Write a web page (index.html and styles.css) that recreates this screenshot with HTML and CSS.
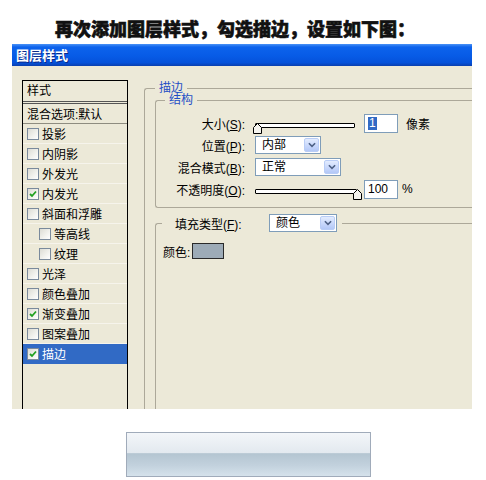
FILE: index.html
```html
<!DOCTYPE html>
<html lang="zh">
<head>
<meta charset="utf-8">
<link rel="stylesheet" href="styles.css">
</head>
<body>
<h1 class="heading">再次添加图层样式，勾选描边，设置如下图：</h1>
<div class="window">
  <div class="titlebar">图层样式</div>
  <div class="dlg">
    <div class="stylelist">
      <div class="lhead">样式</div>
      <div class="lrow blend">混合选项:默认</div>
      <div class="lrow"><span class="cb"></span>投影</div>
      <div class="lrow"><span class="cb"></span>内阴影</div>
      <div class="lrow"><span class="cb"></span>外发光</div>
      <div class="lrow"><span class="cb"><svg viewBox="0 0 10 10"><path d="M2 5 L4 7 L8 2.5" /></svg></span>内发光</div>
      <div class="lrow"><span class="cb"></span>斜面和浮雕</div>
      <div class="lrow sub"><span class="cb"></span>等高线</div>
      <div class="lrow sub"><span class="cb"></span>纹理</div>
      <div class="lrow"><span class="cb"></span>光泽</div>
      <div class="lrow"><span class="cb"></span>颜色叠加</div>
      <div class="lrow"><span class="cb"><svg viewBox="0 0 10 10"><path d="M2 5 L4 7 L8 2.5" /></svg></span>渐变叠加</div>
      <div class="lrow"><span class="cb"></span>图案叠加</div>
      <div class="lrow sel"><span class="cb"><svg viewBox="0 0 10 10"><path d="M2 5 L4 7 L8 2.5" /></svg></span>描边</div>
    </div>
    <div class="panel">
      <fieldset class="grp outer">
        <legend class="cap">描边</legend>
        <fieldset class="grp struct">
          <legend class="cap">结构</legend>
          <div class="form">
            <label class="lbl">大小(<u>S</u>):</label>
            <div class="ctl">
              <div class="slider w100"><svg class="thumb left" viewBox="0 0 9 11"><path d="M0.5 4.5 L4.5 0.5 L8.5 4.5 L8.5 10.5 L0.5 10.5 Z" /></svg></div>
              <div class="num gap9"><span class="hl">1</span></div>
              <span class="unit">像素</span>
            </div>
            <label class="lbl">位置(<u>P</u>):</label>
            <div class="ctl">
              <div class="select w66"><span class="val">内部</span><span class="arrow"><svg viewBox="0 0 9 6"><path d="M1 1 L4.5 4.5 L8 1" /></svg></span></div>
            </div>
            <label class="lbl">混合模式(<u>B</u>):</label>
            <div class="ctl">
              <div class="select w86"><span class="val">正常</span><span class="arrow"><svg viewBox="0 0 9 6"><path d="M1 1 L4.5 4.5 L8 1" /></svg></span></div>
            </div>
            <label class="lbl">不透明度(<u>O</u>):</label>
            <div class="ctl">
              <div class="slider w102"><svg class="thumb right" viewBox="0 0 9 11"><path d="M0.5 4.5 L4.5 0.5 L8.5 4.5 L8.5 10.5 L0.5 10.5 Z" /></svg></div>
              <div class="num gap7">100</div>
              <span class="unit pct">%</span>
            </div>
          </div>
        </fieldset>
        <fieldset class="grp fill">
          <legend class="filllegend"><span class="flabel">填充类型(<u>F</u>):</span><span class="select w68"><span class="val">颜色</span><span class="arrow"><svg viewBox="0 0 9 6"><path d="M1 1 L4.5 4.5 L8 1" /></svg></span></span></legend>
          <div class="colorrow">颜色:<span class="swatch"></span></div>
        </fieldset>
      </fieldset>
    </div>
  </div>
</div>
<div class="bar"></div>
</body>
</html>
```
FILE: styles.css
```css
html, body {
  margin: 0;
  padding: 0;
  background: #ffffff;
}
body {
  font-family: "Liberation Sans", "Noto Sans CJK SC", sans-serif;
  font-size: 12px;
  color: #000;
}
.heading {
  margin: 0;
  height: 44px;
  box-sizing: border-box;
  padding: 16px 0 0 55px;
  font-family: "Noto Sans CJK SC", sans-serif;
  font-size: 18px;
  font-weight: 900;
  line-height: 24px;
  color: #111;
  -webkit-text-stroke: 0.6px #111;
  white-space: nowrap;
}
.window {
  margin-left: 12px;
  width: 460px;
  overflow: hidden;
}
.titlebar {
  height: 22px;
  line-height: 22px;
  padding-left: 4px;
  background: linear-gradient(to bottom, #4a92f6 0%, #0d63ec 14%, #075be6 55%, #0552da 85%, #0a3fae 100%);
  color: #fff;
  font-family: "Noto Sans CJK SC", sans-serif;
  font-weight: bold;
  font-size: 13px;
  text-shadow: 1px 1px 0 #0a2a8a;
}
.dlg {
  height: 343px;
  overflow: hidden;
  background: #ece9d8;
  display: flex;
  align-items: flex-start;
  gap: 16px;
  padding: 14px 0 0 10px;
  box-sizing: border-box;
}
.stylelist {
  flex: 0 0 auto;
  width: 106px;
  height: 360px;
  box-sizing: border-box;
  border: 1px solid #000;
}
.lhead {
  height: 23px;
  line-height: 20px;
  box-sizing: border-box;
  padding-left: 4px;
  border-bottom: 3px double #555;
}
.lrow {
  height: 20px;
  box-sizing: border-box;
  display: flex;
  align-items: center;
  gap: 3px;
  padding-left: 4px;
  border-bottom: 1px solid #f6f4ec;
  white-space: nowrap;
}
.lrow.blend {
  border-bottom: 1px solid #8e8c80;
  padding-left: 4px;
}
.lrow.sub {
  padding-left: 16px;
}
.lrow.sel {
  background: #316ac5;
  color: #fff;
  border-bottom-color: #316ac5;
}
.cb {
  width: 12px;
  height: 12px;
  box-sizing: border-box;
  border: 1px solid #7a8a9c;
  background: linear-gradient(135deg, #dcdcd4 0%, #f2f2ee 60%, #ffffff 100%);
  display: inline-flex;
  flex: 0 0 auto;
}
.cb svg {
  width: 10px;
  height: 10px;
}
.cb path {
  fill: none;
  stroke: #21a121;
  stroke-width: 1.8;
}
.panel {
  flex: 0 0 auto;
  width: 360px;
  margin-top: 2px;
}
.grp {
  margin: 0;
  min-width: 0;
  border: 1px solid #aca899;
  border-radius: 3px;
}
.cap {
  padding: 0 4px;
  line-height: 12px;
  color: #1f4fc6;
}
.outer {
  height: 400px;
  padding: 0 0 0 10px;
  border-right: none;
}
.struct {
  padding: 6px 0 7px 9px;
  border-right: none;
}
.form {
  display: grid;
  grid-template-columns: 80px auto;
  grid-auto-rows: 22px;
  column-gap: 10px;
  align-items: center;
}
.lbl {
  text-align: right;
  white-space: nowrap;
}
.ctl {
  display: flex;
  align-items: center;
}
.slider {
  position: relative;
  height: 5px;
  box-sizing: border-box;
  border: 1px solid #000;
  background: #fff;
  margin-top: 4px;
  border-radius: 1px;
}
.w100 { width: 100px; }
.w102 { width: 102px; }
.thumb {
  position: absolute;
  top: -1px;
  width: 9px;
  height: 11px;
}
.thumb.left { left: -3px; }
.thumb.right { right: -6px; }
.thumb path {
  fill: #f4f3ee;
  stroke: #000;
  stroke-width: 1;
}
.num {
  width: 34px;
  height: 19px;
  box-sizing: border-box;
  border: 1px solid #7f9db9;
  background: #fff;
  padding: 2px 0 0 3px;
  line-height: 13px;
  font-size: 12px;
}
.gap9 { margin-left: 9px; }
.gap7 { margin-left: 7px; }
.hl {
  display: inline-block;
  background: #316ac5;
  color: #fff;
  padding: 0 1px;
}
.unit {
  margin-left: 8px;
}
.unit.pct {
  margin-left: 4px;
}
.select {
  height: 18px;
  box-sizing: border-box;
  border: 1px solid #7f9db9;
  background: #fff;
  display: flex;
  align-items: center;
  padding: 0 1px 0 6px;
}
.w66 { width: 66px; }
.w86 { width: 86px; }
.w68 { width: 68px; }
.val {
  flex: 1 1 auto;
  line-height: 14px;
}
.arrow {
  width: 15px;
  height: 14px;
  box-sizing: border-box;
  border: 1px solid #b9cdf6;
  border-radius: 2px;
  background: linear-gradient(to bottom, #e3ecfe 0%, #c6d6fb 60%, #b3c8f7 100%);
  display: flex;
  align-items: center;
  justify-content: center;
}
.arrow svg {
  width: 8px;
  height: 6px;
}
.arrow path {
  fill: none;
  stroke: #4d6185;
  stroke-width: 1.8;
}
.fill {
  margin-top: 6px;
  height: 200px;
  padding: 11px 0 0 6px;
  border-right: none;
}
.filllegend {
  padding: 0 5px 0 13px;
  display: flex;
  align-items: center;
}
.flabel {
  width: 94px;
  white-space: nowrap;
}
.colorrow {
  margin-left: 1px;
  height: 16px;
  display: flex;
  align-items: center;
  gap: 2px;
}
.swatch {
  width: 32px;
  height: 16px;
  box-sizing: border-box;
  border: 1px solid #2a2a2a;
  background: #9dabb7;
}
.bar {
  margin: 23px 0 0 126px;
  width: 245px;
  height: 45px;
  box-sizing: border-box;
  border: 1px solid #a0abba;
  background: linear-gradient(to bottom, #f3f6f9 0%, #e3e9ef 46%, #b4c5d1 48%, #c2d1dd 75%, #d5e2eb 100%);
}
```
